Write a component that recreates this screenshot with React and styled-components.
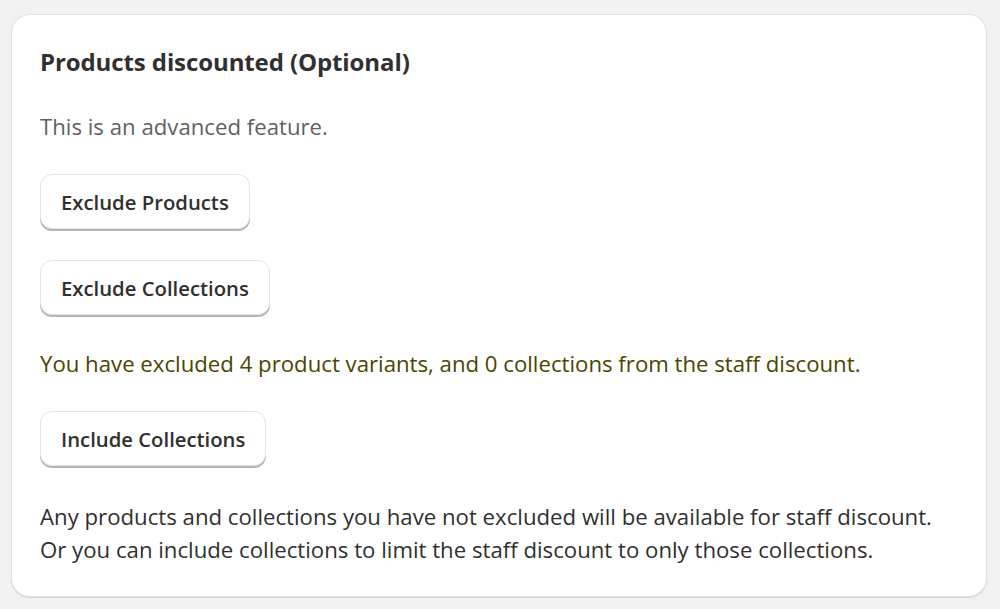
import React from 'react'
import styled, { createGlobalStyle } from 'styled-components'

const GlobalStyle = createGlobalStyle`
    html, body {
        margin: 0;
        padding: 0;
        background: #f1f1f1;
        font-family: "Open Sans", "Noto Sans", Arial, sans-serif;
    }
`

const Page = styled.div`
    padding: 15px 14px 13px 12px;
`

const Card = styled.div`
    background: #ffffff;
    border-radius: 18px;
    box-shadow: 0 0 0 1px #e2e2e2, 0 1px 1px 1px #d4d4d4;
    padding: 33px 28px 30px;
    display: flex;
    flex-direction: column;
    align-items: flex-start;
    gap: 31px;
`

const Title = styled.h2`
    margin: 0 0 3px;
    font-size: 24px;
    line-height: 28px;
    font-weight: 700;
    color: #303030;
    letter-spacing: -0.1px;
`

const Text = styled.p`
    margin: ${p => p.offset || 0}px 0 0;
    font-size: 22.2px;
    line-height: 33px;
    color: ${p => p.tone === 'success' ? '#4a4600' : p.tone === 'subdued' ? '#616161' : '#303030'};
    white-space: nowrap;
`

const Button = styled.button`
    height: 55px;
    padding: 0 20px;
    background: #ffffff;
    border: 1px solid #e3e3e3;
    border-radius: 12px;
    box-shadow: 0 2px 0 0 #b5b5b5;
    font-family: inherit;
    font-size: 20.3px;
    font-weight: 600;
    color: #303030;
    cursor: pointer;
`

const App = () => {
    return (
        <Page>
            <GlobalStyle />
            <Card>
                <Title>Products discounted (Optional)</Title>
                <Text tone="subdued">This is an advanced feature.</Text>
                <Button>Exclude Products</Button>
                <Button>Exclude Collections</Button>
                <Text tone="success" offset={1}>You have excluded 4 product variants, and 0 collections from the staff discount.</Text>
                <Button>Include Collections</Button>
                <Text offset={3}>
                    Any products and collections you have not excluded will be available for staff discount.
                    <br />
                    Or you can include collections to limit the staff discount to only those collections.
                </Text>
            </Card>
        </Page>
    )
}

export default App
